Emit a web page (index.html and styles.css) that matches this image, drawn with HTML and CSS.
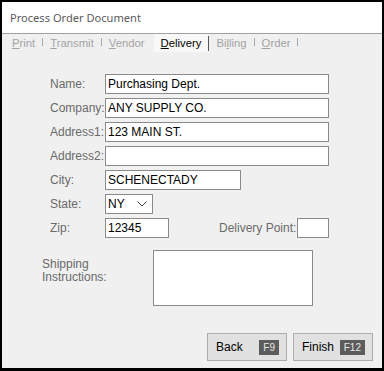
FILE: index.html
```html
<!DOCTYPE html>
<html lang="en">
<head>
    <meta charset="UTF-8">
    <title>Process Order Document</title>
    <link rel="stylesheet" href="styles.css">
</head>
<body>
    <div class="window">
        <div class="titlebar">Process Order Document</div>

        <div class="tabs">
            <span class="tab off"><u>P</u>rint</span><span class="sep"></span>
            <span class="tab off"><u>T</u>ransmit</span><span class="sep"></span>
            <span class="tab off"><u>V</u>endor</span>
            <span class="tab active"><u>D</u>elivery</span><span class="sep dark"></span>
            <span class="tab off">Bi<u>l</u>ling</span><span class="sep"></span>
            <span class="tab off"><u>O</u>rder</span><span class="sep"></span>
        </div>

        <div class="content">
            <div class="fields">
                <label class="lbl">Name:</label>
                <input class="box wide" type="text" value="Purchasing Dept.">

                <label class="lbl">Company:</label>
                <input class="box wide" type="text" value="ANY SUPPLY CO.">

                <label class="lbl">Address1:</label>
                <input class="box wide" type="text" value="123 MAIN ST.">

                <label class="lbl">Address2:</label>
                <input class="box wide" type="text" value="">

                <label class="lbl">City:</label>
                <input class="box city" type="text" value="SCHENECTADY">

                <label class="lbl">State:</label>
                <div class="box state">
                    <span>NY</span>
                    <svg width="10" height="6" viewBox="0 0 10 6"><path d="M0.5 0.5 L5 5 L9.5 0.5" fill="none" stroke="#444" stroke-width="1"/></svg>
                </div>

                <label class="lbl">Zip:</label>
                <div class="zip-row">
                    <input class="box zip" type="text" value="12345">
                    <label class="lbl dp">Delivery Point:</label>
                    <input class="box dpbox" type="text" value="">
                </div>
            </div>

            <div class="shipping">
                <label class="lbl ship">Shipping<br>Instructions:</label>
                <textarea class="box notes"></textarea>
            </div>

            <div class="actions">
                <button class="btn">Back <span class="key">F9</span></button>
                <button class="btn">Finish <span class="key">F12</span></button>
            </div>
        </div>
    </div>
</body>
</html>
```

FILE: styles.css
```css
body {
    margin: 0;
    font-family: 'Liberation Sans', Arial, sans-serif;
    font-size: 12px;
}

.window {
    width: 384px;
    height: 371px;
    box-sizing: border-box;
    border: solid #000;
    border-width: 2px 2px 3px 2px;
    background: #f0f0f0;
    display: flex;
    flex-direction: column;
}

.titlebar {
    height: 31px;
    background: #fff;
    border-bottom: 1px solid #a0a0a0;
    padding-left: 8px;
    display: flex;
    align-items: center;
    font-family: 'Noto Sans', sans-serif;
    font-size: 11.1px;
    color: #5a5a5a;
}

.tabs {
    display: flex;
    align-items: center;
    height: 18px;
    padding-left: 3px;
    font-size: 11.3px;
}

.tab {
    padding: 0 7px;
    height: 18px;
    line-height: 19px;
}

.tab.off {
    color: #a3a3a3;
}

.tab.active {
    margin-left: 2px;
    color: #000;
    background: #f8f8f8;
}

.sep {
    width: 1px;
    height: 8px;
    margin-top: -3px;
    background: #a8a8a8;
}

.sep.dark {
    height: 15px;
    margin-top: 0;
    background: #555;
}

.content {
    flex: 1;
    display: flex;
    flex-direction: column;
}

.fields {
    display: grid;
    grid-template-columns: 55px auto;
    grid-auto-rows: 20px;
    row-gap: 4px;
    margin-top: 22px;
    padding-left: 48px;
}

.lbl {
    color: #6a6a6a;
    display: flex;
    align-items: center;
}

.box {
    box-sizing: border-box;
    height: 20px;
    border: 1px solid #8a8a8a;
    background: #fff;
    font-family: 'Liberation Sans', Arial, sans-serif;
    font-size: 12px;
    color: #000;
    padding: 0 2px;
    margin: 0;
    outline: none;
}

.wide {
    width: 224px;
}

.city {
    width: 136px;
}

.state {
    width: 48px;
    display: flex;
    align-items: center;
    justify-content: space-between;
    padding-right: 5px;
}

.zip-row {
    display: flex;
    align-items: center;
}

.zip {
    width: 64px;
}

.dp {
    margin-left: 50px;
    width: 78px;
}

.dpbox {
    width: 32px;
}

.shipping {
    display: flex;
    margin-top: 12px;
    padding-left: 40px;
}

.ship {
    width: 111px;
    align-items: flex-start;
    line-height: 13px;
    padding-top: 8px;
}

.notes {
    width: 160px;
    height: 56px;
    resize: none;
}

.actions {
    margin-top: auto;
    margin-bottom: 7px;
    display: flex;
    justify-content: flex-end;
    gap: 6px;
    padding-right: 9px;
}

.btn {
    width: 80px;
    height: 28px;
    box-sizing: border-box;
    background: #e1e1e1;
    border: 1px solid #adadad;
    font-family: 'Liberation Sans', Arial, sans-serif;
    font-size: 12px;
    color: #000;
    display: flex;
    align-items: center;
    justify-content: space-between;
    padding: 0 7px 0 8px;
}

.key {
    background: #5c5c5c;
    color: #e8e8e8;
    font-size: 10px;
    height: 15px;
    line-height: 15px;
    padding: 0 4px;
}
```
